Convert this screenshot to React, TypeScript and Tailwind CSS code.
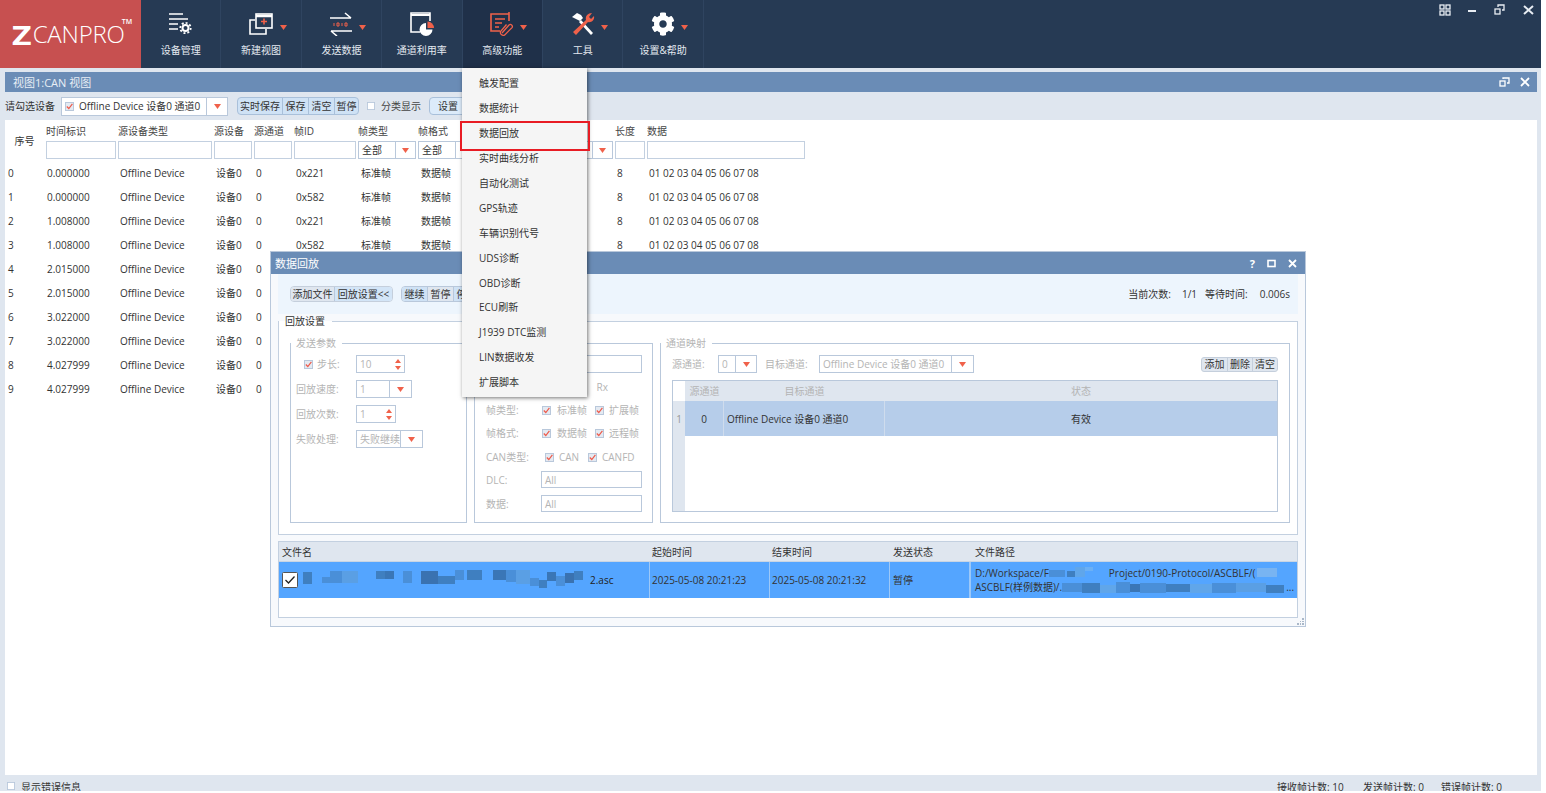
import React from 'react';
import { FaCog } from 'react-icons/fa';

const FONT = "font-['Open_Sans','Noto_Sans_CJK_SC',sans-serif]";

const rows = [
  ['0', '0.000000', '0x221'],
  ['1', '0.000000', '0x582'],
  ['2', '1.008000', '0x221'],
  ['3', '1.008000', '0x582'],
  ['4', '2.015000', '0x221'],
  ['5', '2.015000', '0x582'],
  ['6', '3.022000', '0x221'],
  ['7', '3.022000', '0x582'],
  ['8', '4.027999', '0x221'],
  ['9', '4.027999', '0x582'],
];

const menuItems = ['触发配置', '数据统计', '数据回放', '实时曲线分析', '自动化测试', 'GPS轨迹', '车辆识别代号', 'UDS诊断', 'OBD诊断', 'ECU刷新', 'J1939 DTC监测', 'LIN数据收发', '扩展脚本'];

const tableCols = 'grid grid-cols-[39px_70px_94px_38px_38px_62px_58px_58px_60px_73px_30px_158px] gap-x-[2px]';

// small red triangle used in all dropdowns
const Caret = ({ className = '' }: { className?: string }) => (
  <svg width="7" height="5" viewBox="0 0 7 5" className={className}><path d="M0 0h7L3.5 5z" fill="#f0614a" /></svg>
);

const Spin = () => (
  <svg width="6" height="11" viewBox="0 0 6 11"><path d="M3 0l3 4H0zM0 7h6l-3 4z" fill="#f0614a" /></svg>
);

const Check = ({ on = true, w = 9 }: { on?: boolean; w?: number }) => (
  <svg width={w} height={w} viewBox="0 0 9 9" className="shrink-0">
    <rect x="0.5" y="0.5" width="8" height="8" fill={on ? '#e4eaf2' : '#fff'} stroke="#b9c8db" />
    {on && <path d="M1.8 4.5l2 2 3.6-4.6" fill="none" stroke="#ee5a4a" strokeWidth="1.2" />}
  </svg>
);

const Select = ({ text, w, arrow = 22, h = 'h-[18px]', muted = false }: { text: string; w: string; arrow?: number; h?: string; muted?: boolean }) => (
  <div className={`${w} ${h} flex items-center border border-[#b9c8db] bg-white shrink-0`}>
    <span className={`flex-1 pl-[3px] truncate ${muted ? 'text-[#b4b4b4]' : ''}`}>{text}</span>
    <span className="h-full flex items-center justify-center border-l border-[#b9c8db]" style={{ width: arrow }}><Caret /></span>
  </div>
);

const SpinBox = ({ text, w }: { text: string; w: string }) => (
  <div className={`${w} h-[18px] flex items-center justify-between border border-[#b9c8db] bg-white pl-[3px] pr-[3px] text-[#b4b4b4]`}>
    <span>{text}</span>
    <Spin />
  </div>
);

const Mosaic = ({ w, h, cells }: { w: number; h: number; cells: [number, number, number, number, string][] }) => (
  <svg width={w} height={h} viewBox={`0 0 ${w} ${h}`} className="inline-block align-middle shrink-0">
    {cells.map((c, i) => <rect key={i} x={c[0]} y={c[1]} width={c[2]} height={c[3]} fill={c[4]} />)}
  </svg>
);

const NavIcon = ({ name }: { name: string }) => {
  const o = '#f0614a';
  if (name === 'device') return (
    <svg width="25" height="24" viewBox="0 0 25 24" fill="none" stroke="#fff" strokeWidth="1.6">
      <path d="M1 2h14M1 7h19M1 12h9M1 17h9" />
      <circle cx="17.5" cy="16" r="3" strokeWidth="2" />
      <circle cx="17.5" cy="16" r="5.2" strokeWidth="1.8" strokeDasharray="2 2" />
    </svg>
  );
  if (name === 'new') return (
    <svg width="25" height="24" viewBox="0 0 25 24" fill="none" stroke="#fff" strokeWidth="1.6">
      <path d="M6 8H1v14h16v-5" />
      <rect x="7" y="2" width="16" height="14" />
      <path d="M7 4h16" strokeWidth="2.5" />
      <path d="M15 6.5v6M12 9.5h6" stroke={o} />
    </svg>
  );
  if (name === 'send') return (
    <svg width="24" height="24" viewBox="0 0 24 24" fill="none" stroke="#fff" strokeWidth="1.6">
      <path d="M1 6h21M16 1l6 5" />
      <path d="M23 19H2M8 24l-6-5" />
      <path d="M5 11v3M8 11h2v3H8zM13 11v3M16 11h2v3h-2z" stroke={o} strokeWidth="1" />
    </svg>
  );
  if (name === 'rate') return (
    <svg width="24" height="24" viewBox="0 0 24 24" fill="none" stroke="#fff" strokeWidth="1.6">
      <path d="M10 20H1V1h19v8" />
      <path d="M1 3h19" strokeWidth="2" />
      <path d="M16 11a6.5 6.5 0 1 0 6.5 6.5H16z" fill="#fff" stroke="none" />
      <path d="M17.5 9.5v6.5H24a6.5 6.5 0 0 0-6.5-6.5z" fill={o} stroke="none" />
    </svg>
  );
  if (name === 'adv') return (
    <svg width="24" height="24" viewBox="0 0 24 24" fill="none" stroke={o} strokeWidth="1.6">
      <path d="M10 19H1V2h18v7M19 0v4" />
      <path d="M5 7h10M5 11h7M5 15h4" />
      <path d="M12 21l7-8a2 2 0 0 1 3 2.6l-7.5 7.5a3 3 0 0 1-4-3.6l6-7" strokeWidth="1.3" />
    </svg>
  );
  if (name === 'tools') return (
    <svg width="24" height="24" viewBox="0 0 24 24">
      <path d="M1 5l5-4 4 2 2 3-3 3z" fill="#fff" />
      <path d="M8 10l2-2 12 13-2 2z" fill="#fff" />
      <path d="M2 20L15 8c-1-4 2-7 6-7l-3 4 2 2 3-3c1 4-3 7-6 6L5 23z" fill={o} />
    </svg>
  );
  return <FaCog size={24} color="#fff" />;
};

const nav: [string, string, boolean][] = [
  ['device', '设备管理', false],
  ['new', '新建视图', true],
  ['send', '发送数据', true],
  ['rate', '通道利用率', false],
  ['adv', '高级功能', true],
  ['tools', '工具', true],
  ['gear', '设置&帮助', true],
];

const Group = ({ title, className, children }: { title: string; className: string; children: React.ReactNode }) => (
  <fieldset className={`border border-[#b9c8db] ${className}`}>
    <legend className="pl-[5px] pr-[6px] text-[#b4b4b4] leading-[14px] min-h-[14px]">{title}</legend>
    {children}
  </fieldset>
);

const Label = ({ children, w = 'w-[60px]' }: { children: React.ReactNode; w?: string }) => (
  <span className={`${w} shrink-0 text-[#b4b4b4]`}>{children}</span>
);

const App: React.FC = () => {
  return (
    <div className={`relative w-[1541px] h-[791px] overflow-hidden bg-white text-[10px] leading-none text-[#333] flex flex-col ${FONT}`}>
      {/* Top bar */}
      <div className="h-[68px] shrink-0 flex bg-[#263a54]">
        <div className="w-[141px] bg-[#c75050] flex items-center pl-[12px] text-white">
          <span className="inline-block origin-left scale-x-125 text-[27px] font-bold leading-none">Z</span>
          <span className="ml-[5px] text-[24px] font-light leading-none tracking-[-0.2px]">CANPRO</span>
          <span className="self-start mt-[18px] -ml-[3px] text-[7px] font-semibold">TM</span>
        </div>
        {nav.map(([icon, label, caret]) => (
          <div key={icon} className={`w-[80.4px] flex flex-col items-center border-r border-[#2f4460] pt-[12px] ${icon === 'adv' ? 'bg-[#1f3049]' : ''}`}>
            <div className="relative h-[24px]">
              <NavIcon name={icon} />
              {caret && <Caret className="absolute left-full top-[13px] ml-[6px]" />}
            </div>
            <span className="mt-[9px] text-[#e4e9f0]">{label}</span>
          </div>
        ))}
        <div className="flex-1 flex justify-end gap-[16px] pt-[4px] pr-[7px]">
          <svg width="12" height="12" viewBox="0 0 12 12" fill="none" stroke="#e8edf3" strokeWidth="1.3">
            <rect x="1" y="1" width="4" height="4" /><rect x="7" y="1" width="4" height="4" /><rect x="1" y="7" width="4" height="4" /><rect x="7" y="7" width="4" height="4" />
          </svg>
          <svg width="10" height="12" viewBox="0 0 10 12" stroke="#e8edf3" strokeWidth="2"><path d="M1 7h8" /></svg>
          <svg width="11" height="12" viewBox="0 0 11 12" fill="none" stroke="#e8edf3" strokeWidth="1.3" className="ml-[1px]"><rect x="1" y="5" width="5" height="5" /><path d="M4 3V1h6v5H8" /></svg>
          <svg width="11" height="12" viewBox="0 0 11 12" stroke="#e8edf3" strokeWidth="2" className="ml-[2px]"><path d="M1 2l9 8M10 2l-9 8" /></svg>
        </div>
      </div>

      {/* View panel */}
      <div className="flex-1 min-h-0 flex flex-col bg-[#dfe6ef] pt-[4px] pl-[5px] pr-[4px]">
        <div className="h-[20px] shrink-0 bg-[#6a8cb6] flex items-center justify-between pl-[8px] pr-[7px] text-[11px] text-[#e8eef5]">
          <span>视图1:CAN 视图</span>
          <div className="flex items-center gap-[10px]">
            <svg width="11" height="11" viewBox="0 0 11 11" fill="none" stroke="#fff" strokeWidth="1.3"><rect x="1" y="4" width="5" height="5" /><path d="M4 2V1h6v5H8" /></svg>
            <svg width="10" height="10" viewBox="0 0 10 10" stroke="#fff" strokeWidth="1.8"><path d="M1 1l8 8M9 1l-8 8" /></svg>
          </div>
        </div>

        <div className="h-[28px] shrink-0 flex items-center">
          <span className="w-[56px]">请勾选设备</span>
          <div className="w-[167px] h-[19px] flex items-center border border-[#b9c8db] bg-white pl-[3px]">
            <Check on w={9} />
            <span className="ml-[5px] flex-1 whitespace-nowrap">Offline Device 设备0 通道0</span>
            <span className="w-[21px] h-full flex items-center justify-center border-l border-[#b9c8db]"><Caret /></span>
          </div>
          <div className="ml-[9px] flex h-[18px] rounded-[4px] border border-[#a9c0da] bg-[#cfe2f5] overflow-hidden">
            <span className="w-[44px] flex items-center justify-center">实时保存</span>
            <span className="w-[26px] flex items-center justify-center border-l border-[#a9c0da]">保存</span>
            <span className="w-[26px] flex items-center justify-center border-l border-[#a9c0da]">清空</span>
            <span className="w-[24px] flex items-center justify-center border-l border-[#a9c0da]">暂停</span>
          </div>
          <span className="ml-[8px]"><Check on={false} w={8} /></span>
          <span className="ml-[6px] text-[#444]">分类显示</span>
          <span className="ml-[8px] w-[38px] h-[18px] flex items-center justify-center rounded-[4px] border border-[#a9c0da] bg-[#dcebfa]">设置</span>
        </div>

        <div className="flex-1 min-h-0 bg-white overflow-hidden pt-[6px]">
          <div className={`${tableCols} h-[33px]`}>
            <div className="row-span-2 flex items-center justify-center pb-[3px]">序号</div>
            {['时间标识', '源设备类型', '源设备', '源通道', '帧ID', '帧类型', '帧格式', '', '', '长度', '数据'].map((h, i) => (
              <div key={i} className="h-[15px] text-[#444]">{h}</div>
            ))}
            {[0, 1, 2, 3, 4].map(i => <div key={i} className="h-[18px] border border-[#c3d0e0]" />)}
            <Select text="全部" w="w-full" arrow={20} />
            <Select text="全部" w="w-full" arrow={20} />
            <div className="h-[18px] border border-[#c3d0e0]" />
            <Select text="" w="w-full" arrow={20} />
            <div className="h-[18px] border border-[#c3d0e0]" />
            <div className="h-[18px] border border-[#c3d0e0]" />
          </div>
          <div className="pt-[2px]">
            {rows.map(([n, t, id], idx) => (
              <div key={n} className={`${tableCols} h-[24px] items-center`}>
                <span className="pl-[3px]">{n}</span>
                <span className="pl-[1px]">{t}</span>
                <span className="pl-[2px]">Offline Device</span>
                <span className="pl-[2px]">设备0</span>
                <span className="pl-[2px]">0</span>
                {/* the cells further right of row 4+ are behind the playback window */}
                {idx < 4 && (
                  <>
                    <span className="pl-[2px]">{id}</span>
                    <span className="pl-[3px]">标准帧</span>
                    <span className="pl-[3px]">数据帧</span>
                    <span />
                    <span />
                    <span className="pl-[2px]">8</span>
                    <span className="pl-[2px] whitespace-nowrap">01 02 03 04 05 06 07 08</span>
                  </>
                )}
              </div>
            ))}
          </div>
        </div>

        <div className="h-[16px] shrink-0 flex items-start pt-[7px]">
          <span className="ml-[2px]"><Check on={false} w={8} /></span>
          <span className="ml-[6px] w-[1256px] shrink-0">显示错误信息</span>
          <span className="w-[86px] shrink-0">接收帧计数: 10</span>
          <span className="w-[78px] shrink-0">发送帧计数: 0</span>
          <span className="shrink-0">错误帧计数: 0</span>
        </div>
      </div>

      {/* Playback window */}
      <div className="absolute left-[270px] top-[251px] w-[1036px] h-[376px] border border-[#b9c8db] bg-[#f7f9fc] flex flex-col">
        <div className="h-[22px] shrink-0 bg-[#6a8cb6] flex items-center justify-between pl-[4px] pr-[8px] text-[11px] text-white">
          <span>数据回放</span>
          <div className="flex items-center gap-[12px]">
            <span className="font-bold text-[11px]">?</span>
            <svg width="9" height="9" viewBox="0 0 9 9" fill="none" stroke="#fff" strokeWidth="1.6"><rect x="1" y="1.5" width="7" height="6" /></svg>
            <svg width="9" height="9" viewBox="0 0 9 9" stroke="#fff" strokeWidth="1.8"><path d="M1 1l7 7M8 1L1 8" /></svg>
          </div>
        </div>

        <div className="flex-1 min-h-0 flex flex-col px-[7px]">
          <div className="h-[40px] shrink-0 bg-[#edf5fd] flex items-center pl-[12px] pr-[8px]">
            <div className="flex h-[16px] rounded-[4px] border border-[#c5cfdc] overflow-hidden">
              <span className="w-[43px] bg-[#dfe6ef] flex items-center justify-center">添加文件</span>
              <span className="w-[58px] bg-[#d3e5f7] flex items-center justify-center border-l border-[#b9c8db] whitespace-nowrap">回放设置&lt;&lt;</span>
            </div>
            <div className="ml-[8px] flex h-[16px] rounded-[4px] border border-[#b9c8db] overflow-hidden">
              <span className="w-[25px] bg-[#cfe2f5] flex items-center justify-center">继续</span>
              <span className="w-[26px] bg-[#dfe6ef] flex items-center justify-center border-l border-[#b9c8db]">暂停</span>
              <span className="w-[26px] bg-[#cfe2f5] flex items-center justify-center border-l border-[#b9c8db]">停止</span>
            </div>
            <div className="ml-auto flex items-center whitespace-nowrap">
              <span>当前次数:</span>
              <span className="ml-[11px]">1/1</span>
              <span className="ml-[8px]">等待时间:</span>
              <span className="ml-[12px]">0.006s</span>
            </div>
          </div>

          <fieldset className="h-[221px] shrink-0 border border-[#c3d0e0] bg-white">
            <legend className="pl-[6px] pr-[7px] leading-[14px]">回放设置</legend>
            <div className="flex gap-[7px] pt-[8px] pl-[11px]">
              <Group title="发送参数" className="w-[177px] h-[187px]">
                <div className="flex flex-col gap-[7px] pl-[5px] pt-[5px]">
                  <div className="flex items-center">
                    <span className="w-[21px] pl-[8px]"><Check /></span>
                    <Label w="w-[39px]">步长:</Label>
                    <SpinBox text="10" w="w-[49px]" />
                  </div>
                  <div className="flex items-center"><Label>回放速度:</Label><Select text="1" w="w-[56px]" muted /></div>
                  <div className="flex items-center"><Label>回放次数:</Label><SpinBox text="1" w="w-[40px]" /></div>
                  <div className="flex items-center"><Label>失败处理:</Label><Select text="失败继续" w="w-[67px]" muted /></div>
                </div>
              </Group>
              {/* legend and first label of this group lie behind the menu */}
              <Group title="" className="w-[179px] h-[187px]">
                <div className="flex flex-col pl-[11px] pr-[10px] pt-[5px]">
                  <div className="flex items-center justify-end h-[18px]"><div className="w-[101px] h-full border border-[#b9c8db]" /></div>
                  <div className="flex items-center h-[14px] mt-[7px] justify-end pr-[34px] text-[#b4b4b4]">Rx</div>
                  <div className="flex items-center h-[14px] mt-[9px]"><Label w="w-[56px]">帧类型:</Label><Check /><span className="ml-[6px] w-[38px] text-[#b4b4b4]">标准帧</span><Check /><span className="ml-[5px] text-[#b4b4b4]">扩展帧</span></div>
                  <div className="flex items-center h-[14px] mt-[9px]"><Label w="w-[56px]">帧格式:</Label><Check /><span className="ml-[6px] w-[38px] text-[#b4b4b4]">数据帧</span><Check /><span className="ml-[5px] text-[#b4b4b4]">远程帧</span></div>
                  <div className="flex items-center h-[14px] mt-[10px]"><Label w="w-[59px]">CAN类型:</Label><Check /><span className="ml-[5px] w-[29px] text-[#b4b4b4]">CAN</span><Check /><span className="ml-[5px] text-[#b4b4b4]">CANFD</span></div>
                  <div className="flex items-center h-[17px] mt-[7px]"><Label w="w-[55px]">DLC:</Label><div className="flex-1 h-full border border-[#b9c8db] flex items-center pl-[3px] text-[#b4b4b4]">All</div></div>
                  <div className="flex items-center h-[17px] mt-[7px]"><Label w="w-[55px]">数据:</Label><div className="flex-1 h-full border border-[#b9c8db] flex items-center pl-[3px] text-[#b4b4b4]">All</div></div>
                </div>
              </Group>
              <Group title="通道映射" className="w-[630px] h-[187px]">
                <div className="pl-[11px] pr-[11px] pt-[5px]">
                  <div className="flex items-center h-[18px]">
                    <Label w="w-[46px]">源通道:</Label>
                    <Select text="0" w="w-[39px]" arrow={21} muted />
                    <span className="ml-[8px] w-[54px] text-[#b4b4b4]">目标通道:</span>
                    <Select text="Offline Device 设备0 通道0" w="w-[155px]" arrow={22} muted />
                    <div className="ml-auto flex h-[15px] rounded-[3px] border border-[#c5cfdc] bg-[#dfe6ef] overflow-hidden">
                      {['添加', '删除', '清空'].map((b, i) => (
                        <span key={b} className={`w-[25px] flex items-center justify-center ${i ? 'border-l border-[#c5cfdc]' : ''}`}>{b}</span>
                      ))}
                    </div>
                  </div>
                  <div className="mt-[7px] h-[132px] border border-[#b9c8db] flex">
                    <div className="w-[12px] bg-[#dfe6ef] flex flex-col">
                      <div className="h-[20px] bg-white" />
                      <div className="h-[35px] flex items-center justify-center text-[#999]">1</div>
                    </div>
                    <div className="flex-1 flex flex-col">
                      <div className="h-[20px] bg-[#dfe6ef] grid grid-cols-[39px_161px_1fr] items-center text-center text-[#b4b4b4]">
                        <span>源通道</span><span>目标通道</span><span>状态</span>
                      </div>
                      <div className="h-[35px] bg-[#b6cdea] grid grid-cols-[39px_161px_1fr] items-center text-center">
                        <span className="h-full flex items-center justify-center border-r border-[#cfdced]">0</span>
                        <span className="h-full flex items-center pl-[3px] border-r border-[#cfdced] whitespace-nowrap">Offline Device 设备0 通道0</span>
                        <span>有效</span>
                      </div>
                    </div>
                  </div>
                </div>
              </Group>
            </div>
          </fieldset>

          <div className="mt-[6px] h-[77px] shrink-0 border border-[#c3d0e0] bg-white flex flex-col">
            <div className="h-[20px] bg-[#dfe6ef] grid grid-cols-[371px_120px_120px_81px_1fr] items-center border-b border-[#c9d5e3]">
              <span className="pl-[3px]">文件名</span><span className="pl-[2px]">起始时间</span><span className="pl-[2px]">结束时间</span><span className="pl-[3px]">发送状态</span><span className="pl-[4px]">文件路径</span>
            </div>
            <div className="h-[36px] bg-[#54a5ff] grid grid-cols-[371px_120px_120px_81px_1fr] items-center">
              <div className="h-full flex items-center border-r border-[#9cc8f8] pl-[3px]">
                <svg width="16" height="16" viewBox="0 0 16 16" className="shrink-0"><rect x="0.5" y="0.5" width="15" height="15" rx="1" fill="#fff" stroke="#555" /><path d="M3.5 8l3 3 6-6.5" fill="none" stroke="#222" strokeWidth="1.3" /></svg>
                <Mosaic w={292} h={20} cells={[
                  [5, 2, 9, 12, '#3f7fc0'], [24, 7, 8, 6, '#4a8fd8'], [32, 1, 12, 12, '#4a8fd8'], [44, 1, 16, 12, '#5a9fe4'],
                  [78, 1, 9, 8, '#3f7fc0'], [87, 1, 9, 8, '#3a76b6'], [105, 1, 9, 12, '#4a8fd8'], [123, 1, 17, 13, '#3a72b0'],
                  [140, 6, 17, 8, '#3f7fc0'], [157, 0, 9, 10, '#4a8fd8'], [169, 0, 15, 10, '#3f7fc0'],
                  [195, 0, 13, 10, '#3a76b6'], [208, 0, 10, 12, '#4a8fd8'], [218, 0, 14, 14, '#5a9fe4'],
                  [232, 8, 9, 8, '#4a8fd8'], [241, 10, 8, 8, '#3f7fc0'], [249, 2, 9, 9, '#3a76b6'],
                  [258, 6, 9, 10, '#4a8fd8'], [267, 3, 9, 10, '#3a72b0'], [276, 1, 9, 9, '#3f7fc0'],
                ]} />
                <span className="text-[#222]">2.asc</span>
              </div>
              <span className="h-full flex items-center pl-[2px] border-r border-[#9cc8f8] whitespace-nowrap">2025-05-08 20:21:23</span>
              <span className="h-full flex items-center pl-[2px] border-r border-[#9cc8f8] whitespace-nowrap">2025-05-08 20:21:32</span>
              <span className="h-full flex items-center pl-[3px] border-r-2 border-[#9cc8f8]">暂停</span>
              <div className="pl-[4px] leading-[14px] whitespace-nowrap overflow-hidden">
                <div className="flex items-center">
                  <span>D:/Workspace/F</span>
                  <Mosaic w={58} h={12} cells={[[0, 3, 16, 7, '#4a8fd8'], [18, 4, 8, 6, '#3f7fc0'], [26, 0, 10, 10, '#60a6ea'], [36, 0, 8, 4, '#6bb0f5']]} />
                  <span className="ml-[2px]">Project/0190-Protocol/ASCBLF/(</span>
                  <Mosaic w={24} h={12} cells={[[2, 1, 20, 9, '#78b4f2']]} />
                </div>
                <div className="flex items-center">
                  <span>ASCBLF(样例数据)/.</span>
                  <Mosaic w={222} h={13} cells={[
                    [0, 2, 20, 9, '#4a8fd8'], [20, 2, 18, 10, '#3f7fc0'], [38, 4, 16, 8, '#60a6ea'], [54, 1, 14, 11, '#4a8fd8'],
                    [68, 3, 10, 8, '#3a76b6'], [78, 2, 26, 10, '#4a8fd8'], [104, 3, 24, 8, '#3f7fc0'], [128, 3, 22, 9, '#60a6ea'],
                    [150, 2, 24, 10, '#4a8fd8'], [174, 2, 30, 9, '#5a9fe4'], [204, 4, 18, 8, '#3f7fc0'],
                  ]} />
                  <span className="ml-[2px]">...</span>
                </div>
              </div>
            </div>
          </div>
        </div>
        <div className="absolute right-[1px] bottom-[1px] w-[7px] h-[7px] grid grid-cols-3 gap-[1px]">
          {[0, 1, 2, 3, 4, 5, 6, 7, 8].map(i => <span key={i} className={i === 0 || i === 1 || i === 3 ? '' : 'bg-[#aab8c9]'} />)}
        </div>
      </div>

      {/* Dropdown of 高级功能 */}
      <div className="absolute left-[462px] top-[68px] w-[125px] h-[329px] bg-[#f5f5f5] shadow-[1px_1px_4px_rgba(0,0,0,0.55)] pt-[3px] flex flex-col">
        {menuItems.map(m => (
          <div key={m} className="h-[24.9px] shrink-0 flex items-center pl-[17px] text-[#333] whitespace-nowrap">{m}</div>
        ))}
      </div>
      <div className="absolute left-[460px] top-[121px] w-[130px] h-[30px] border-2 border-[#e81c24]" />
    </div>
  );
};

export default App;
